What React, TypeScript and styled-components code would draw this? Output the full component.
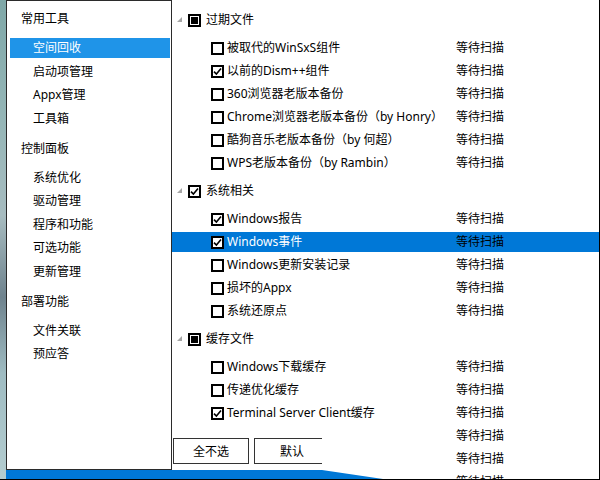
import React from "react";
import styled, { createGlobalStyle } from "styled-components";

const GlobalStyle = createGlobalStyle`
  html, body {
    margin: 0;
    padding: 0;
    background: #fff;
  }
  body {
    font-family: "Noto Sans", "Noto Sans CJK SC", sans-serif;
    font-size: 12px;
    color: #000;
  }
`;

type NavSection = { title: string; items: string[] };

const navSections: NavSection[] = [
  { title: "常用工具", items: ["空间回收", "启动项管理", "Appx管理", "工具箱"] },
  { title: "控制面板", items: ["系统优化", "驱动管理", "程序和功能", "可选功能", "更新管理"] },
  { title: "部署功能", items: ["文件关联", "预应答"] },
];

type CheckState = "none" | "checked" | "partial";
type TreeItem = { name: string; checked?: boolean; selected?: boolean };
type TreeGroup = { title: string; state: CheckState; items: TreeItem[] };

const groups: TreeGroup[] = [
  {
    title: "过期文件",
    state: "partial",
    items: [
      { name: "被取代的WinSxS组件" },
      { name: "以前的Dism++组件", checked: true },
      { name: "360浏览器老版本备份" },
      { name: "Chrome浏览器老版本备份（by Honry）" },
      { name: "酷狗音乐老版本备份（by 何超）" },
      { name: "WPS老版本备份（by Rambin）" },
    ],
  },
  {
    title: "系统相关",
    state: "checked",
    items: [
      { name: "Windows报告", checked: true },
      { name: "Windows事件", checked: true, selected: true },
      { name: "Windows更新安装记录" },
      { name: "损坏的Appx" },
      { name: "系统还原点" },
    ],
  },
  {
    title: "缓存文件",
    state: "partial",
    items: [
      { name: "Windows下载缓存" },
      { name: "传递优化缓存" },
      { name: "Terminal Server Client缓存", checked: true },
      { name: "缩略图缓存" },
      { name: "字体缓存" },
      { name: "临时文件" },
    ],
  },
];

const Frame = styled.div`
  position: relative;
  width: 600px;
  height: 480px;
  box-sizing: border-box;
  display: flex;
  border-right: 1px solid #000;
  border-bottom: 1px solid #000;
  overflow: hidden;
  background: #fff;
`;

// strip of blurred desktop wallpaper on the far left
const Desktop = styled.div`
  width: 6px;
  flex: none;
  background: linear-gradient(
    180deg,
    #7fa8a8 0%,
    #95b6b7 25%,
    #a7bcc0 45%,
    #6f838e 62%,
    #9fbcc2 78%,
    #b4cdd0 100%
  );
`;

const Sidebar = styled.nav`
  width: 166px;
  height: 470px;
  flex: none;
  box-sizing: border-box;
  border: 1px solid #2b2b2b;
  padding-top: 8px;
  display: flex;
  flex-direction: column;
  gap: 10px;
  background: #fff;
`;

const NavGroup = styled.div`
  display: flex;
  flex-direction: column;
`;

const NavTitle = styled.div`
  height: 20px;
  line-height: 20px;
  padding-left: 14px;
`;

const NavList = styled.div`
  margin-top: 9px;
  display: flex;
  flex-direction: column;
  gap: 3.5px;
`;

const NavItem = styled.div<{ $active?: boolean }>`
  height: 20px;
  line-height: 20px;
  margin: 0 1px 0 3px;
  padding-left: 23px;
  background: ${(p) => (p.$active ? "#1f94e8" : "transparent")};
  color: ${(p) => (p.$active ? "#fff" : "#000")};
`;

const Main = styled.main`
  position: relative;
  flex: 1;
  height: 479px;
  overflow: hidden;
  background: #fff;
`;

const Tree = styled.div`
  padding-top: 10px;
  display: flex;
  flex-direction: column;
  gap: 8px;
`;

const Group = styled.section`
  display: flex;
  flex-direction: column;
`;

const GroupHeader = styled.div`
  height: 20px;
  display: flex;
  align-items: center;
  padding-left: 5px;
`;

const Expander = styled.svg`
  width: 5px;
  height: 5px;
  margin-right: 6px;
  margin-top: -2px;
`;

const GroupTitle = styled.span`
  margin-left: 5px;
  line-height: 20px;
`;

const GroupItems = styled.div`
  margin-top: 8px;
  display: flex;
  flex-direction: column;
  gap: 3px;
`;

const Row = styled.div<{ $selected?: boolean }>`
  height: 20px;
  display: flex;
  align-items: center;
  padding-left: 39px;
  background: ${(p) => (p.$selected ? "#0078d7" : "transparent")};
`;

const ItemName = styled.span<{ $selected?: boolean }>`
  width: 229px;
  margin-left: 3px;
  white-space: nowrap;
  line-height: 20px;
  color: ${(p) => (p.$selected ? "#fff" : "#000")};
`;

const Status = styled.span`
  line-height: 20px;
  color: #000;
`;

const Box = styled.span`
  width: 13px;
  height: 13px;
  flex: none;
  box-sizing: border-box;
  border: 2px solid #000;
  background: #fff;
  display: flex;
  align-items: center;
  justify-content: center;
`;

const PartialFill = styled.span`
  width: 7px;
  height: 7px;
  background: #000;
`;

// button strip drawn over the lower part of the list
const ButtonBar = styled.div`
  position: absolute;
  left: 0;
  top: 429px;
  width: 150px;
  height: 41px;
  box-sizing: border-box;
  padding: 9px 0 0 1px;
  display: flex;
  gap: 5px;
  background: #fff;
  overflow: hidden;
`;

const Button = styled.button`
  width: 76px;
  height: 26px;
  flex: none;
  box-sizing: border-box;
  border: 1px solid #333;
  background: #fff;
  font-family: inherit;
  font-size: 12px;
  color: #000;
  padding: 0;
`;

const Progress = styled.div`
  position: absolute;
  left: 6px;
  top: 470px;
  width: 377px;
  height: 9px;
  background: #0078d7;
  clip-path: polygon(0 0, 316px 0, 377px 100%, 0 100%);
`;

function CheckBox({ state }: { state: CheckState }) {
  return (
    <Box>
      {state === "partial" && <PartialFill />}
      {state === "checked" && (
        <svg width="9" height="9" viewBox="0 0 9 9">
          <path d="M1 4.6 L3.4 7 L8 1.6" fill="none" stroke="#000" strokeWidth="1.6" />
        </svg>
      )}
    </Box>
  );
}

export default function App() {
  return (
    <>
      <GlobalStyle />
      <Frame>
        <Desktop />
        <Sidebar>
          {navSections.map((s) => (
            <NavGroup key={s.title}>
              <NavTitle>{s.title}</NavTitle>
              <NavList>
                {s.items.map((it) => (
                  <NavItem key={it} $active={it === "空间回收"}>
                    {it}
                  </NavItem>
                ))}
              </NavList>
            </NavGroup>
          ))}
        </Sidebar>
        <Main>
          <Tree>
            {groups.map((g) => (
              <Group key={g.title}>
                <GroupHeader>
                  <Expander viewBox="0 0 5 5">
                    <polygon points="0,5 5,0 5,5" fill="#a6a6a6" />
                  </Expander>
                  <CheckBox state={g.state} />
                  <GroupTitle>{g.title}</GroupTitle>
                </GroupHeader>
                <GroupItems>
                  {g.items.map((it) => (
                    <Row key={it.name} $selected={it.selected}>
                      <CheckBox state={it.checked ? "checked" : "none"} />
                      <ItemName $selected={it.selected}>{it.name}</ItemName>
                      <Status>等待扫描</Status>
                    </Row>
                  ))}
                </GroupItems>
              </Group>
            ))}
          </Tree>
          <ButtonBar>
            <Button>全不选</Button>
            <Button>默认</Button>
          </ButtonBar>
        </Main>
        <Progress />
      </Frame>
    </>
  );
}
